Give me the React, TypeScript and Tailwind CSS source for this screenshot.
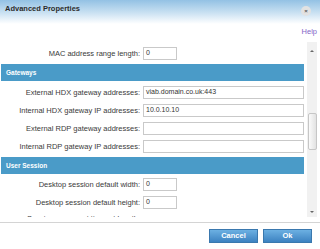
const font = "font-['Liberation_Sans',Arial,sans-serif]";

function Field({ label, value = "", wide = false }: { label: string; value?: string; wide?: boolean }) {
  return (
    <div className="flex h-[18px] items-center">
      <div className="w-[140px] pr-[1px] text-right text-[7.5px] leading-[9px] text-[#3a3a3a]">{label}</div>
      <div
        className={`ml-[2px] flex h-[13px] items-center border border-[#c9c9c9] bg-white px-[2px] text-[7px] leading-[8px] text-[#333] ${
          wide ? "w-[161px]" : "w-[34px]"
        }`}
      >
        {value}
      </div>
    </div>
  );
}

function SectionHeader({ title }: { title: string }) {
  return (
    <div className="mr-[1px] flex h-[17px] items-center bg-[#4a9bc8] pl-[5px] text-[6.5px] font-bold text-white">
      {title}
    </div>
  );
}

export default function App() {
  return (
    <div className={`${font} flex h-[249px] w-[320px] flex-col overflow-hidden bg-white`}>
      {/* title bar */}
      <div className="flex h-[24px] items-start justify-between bg-linear-to-b from-[#93c1e4] via-[#c6dff1] to-white">
        <div className="pl-[5px] pt-[4px] text-[7.5px] font-bold leading-[9px] text-[#2b2b2b]">Advanced Properties</div>
        <div className="mr-[9px] mt-[6px] flex h-[10px] w-[10px] items-center justify-center rounded-full bg-[#e2e2e2] text-[6px] font-bold leading-none text-[#555]">
          ×
        </div>
      </div>

      <div className="flex h-[16px] items-center justify-end pr-[3px] text-[7.5px] text-[#8466c8]">Help</div>

      {/* scrolling content */}
      <div className="flex h-[177px]">
        <div className="flex-1 overflow-hidden pl-[1px] pt-[4px]">
          <Field label="MAC address range length:" value="0" />
          <div className="mt-[2px]">
            <SectionHeader title="Gateways" />
          </div>
          <div className="mt-[2px]">
            <Field label="External HDX gateway addresses:" value="viab.domain.co.uk:443" wide />
            <Field label="Internal HDX gateway IP addresses:" value="10.0.10.10" wide />
            <Field label="External RDP gateway addresses:" wide />
            <Field label="Internal RDP gateway IP addresses:" wide />
          </div>
          <div className="mt-[2px]">
            <SectionHeader title="User Session" />
          </div>
          <div className="mt-[1px]">
            <Field label="Desktop session default width:" value="0" />
            <Field label="Desktop session default height:" value="0" />
            <div className="flex h-[18px] items-start pt-[3px]">
              <div className="w-[140px] pr-[1px] text-right text-[7.5px] leading-[9px] text-[#3a3a3a]">
                Session reconnect timeout length:
              </div>
            </div>
          </div>
        </div>

        {/* scrollbar */}
        <div className="ml-[2px] mr-[3px] mt-[2px] flex w-[10px] flex-col items-center bg-[#f1f1f1]">
          <div className="mt-[8px] h-0 w-0 border-x-[2px] border-b-[2px] border-x-transparent border-b-[#666]" />
          <div className="mt-[61px] h-[37px] w-[9px] rounded-[2px] border border-[#c6c6c6] bg-linear-to-r from-[#fafafa] to-[#e2e2e2]" />
          <div className="flex-1" />
          <div className="mb-[4px] h-0 w-0 border-x-[2px] border-t-[2px] border-x-transparent border-t-[#666]" />
        </div>
      </div>

      {/* footer */}
      <div className="mt-[5px] border-t border-[#d4d4d4]">
        <div className="flex justify-end gap-[5px] pr-[8px] pt-[6px]">
          <button className="flex h-[14px] w-[49px] items-center justify-center border border-[#3a78ae] bg-linear-to-b from-[#6cb0e2] to-[#3c82c1] text-[7.5px] font-bold text-white">
            Cancel
          </button>
          <button className="flex h-[14px] w-[49px] items-center justify-center border border-[#3a78ae] bg-linear-to-b from-[#6cb0e2] to-[#3c82c1] text-[7.5px] font-bold text-white">
            Ok
          </button>
        </div>
      </div>
    </div>
  );
}
